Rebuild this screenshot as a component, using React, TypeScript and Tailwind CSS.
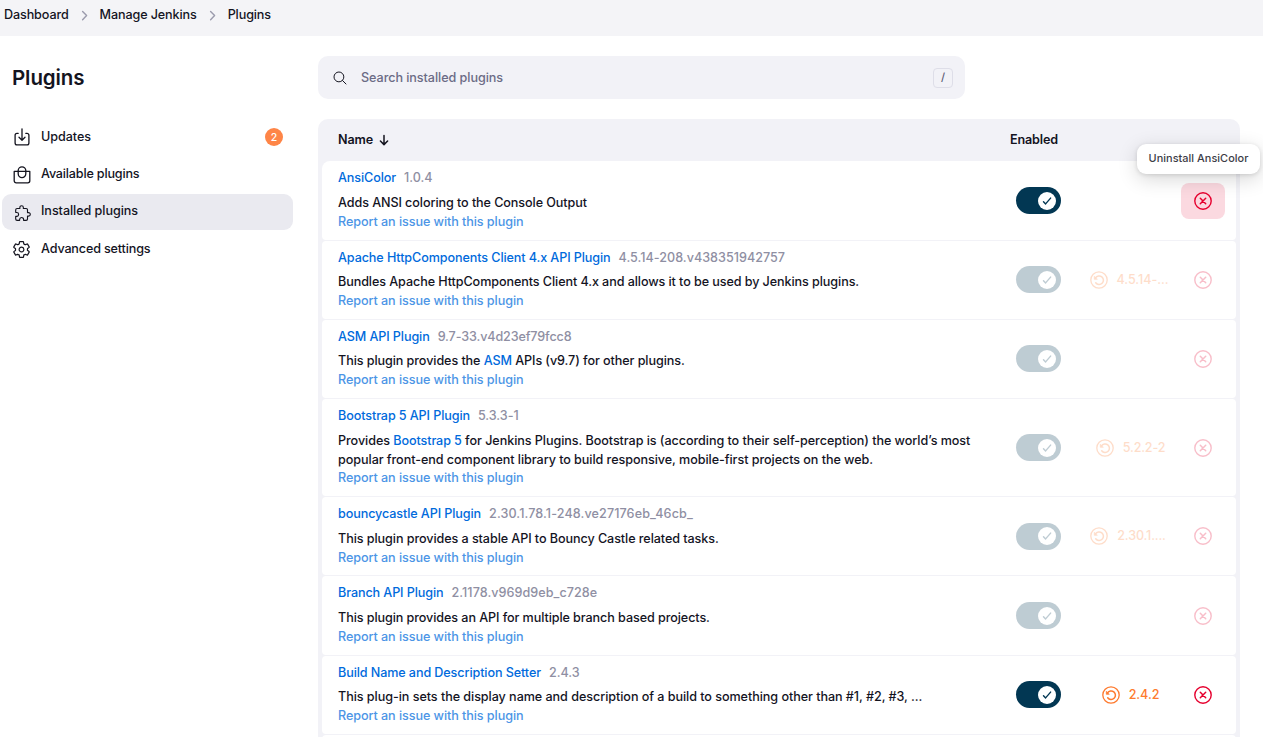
import React from 'react';
import { clsx } from 'clsx';
import { IoExtensionPuzzleOutline, IoSearchOutline, IoSettingsOutline } from 'react-icons/io5';

interface Plugin {
  name: string;
  version: string;
  versionClass?: string;
  description: React.ReactNode;
  descriptionClass?: string;
  spacing: string;
  reportSpacing?: string;
  height: string;
  enabledControls: boolean;
  downgrade?: string;
  downgradeClass?: string;
  highlighted?: boolean;
}

const linkClass = 'font-[550] text-[#006adc] tracking-[-0.1px]';

const plugins: Plugin[] = [
  {
    name: 'AnsiColor',
    version: '1.0.4',
    description: 'Adds ANSI coloring to the Console Output',
    descriptionClass: 'tracking-[-0.08px]',
    spacing: 'mt-[6px]',
    height: 'h-[79px]',
    enabledControls: true,
    highlighted: true,
  },
  {
    name: 'Apache HttpComponents Client 4.x API Plugin',
    version: '4.5.14-208.v438351942757',
    versionClass: 'tracking-[0.01px]',
    description: 'Bundles Apache HttpComponents Client 4.x and allows it to be used by Jenkins plugins.',
    descriptionClass: 'tracking-[-0.085px]',
    spacing: 'mt-[5px]',
    height: 'h-[78px] pb-px',
    enabledControls: false,
    downgrade: '4.5.14-...',
    downgradeClass: '-ml-px mr-px',
  },
  {
    name: 'ASM API Plugin',
    version: '9.7-33.v4d23ef79fcc8',
    versionClass: 'tracking-[-0.13px]',
    description: (
      <>
        This plugin provides the <a className={linkClass}>ASM</a> APIs (v9.7) for other plugins.
      </>
    ),
    descriptionClass: 'tracking-[-0.08px]',
    spacing: 'mt-[5px]',
    height: 'h-[78px] pb-px',
    enabledControls: false,
  },
  {
    name: 'Bootstrap 5 API Plugin',
    version: '5.3.3-1',
    description: (
      <>
        Provides <a className={linkClass}>Bootstrap 5</a> for Jenkins Plugins. Bootstrap is (according to their
        self-perception) the world’s most
        <br />
        popular front-end component library to build responsive, mobile-first projects on the web.
      </>
    ),
    spacing: 'mt-[6px]',
    reportSpacing: '-mt-px',
    height: 'h-[97px]',
    enabledControls: false,
    downgrade: '5.2.2-2',
    downgradeClass: 'ml-px tracking-[-0.2px]',
  },
  {
    name: 'bouncycastle API Plugin',
    version: '2.30.1.78.1-248.ve27176eb_46cb_',
    versionClass: 'tracking-[0.1px]',
    description: 'This plugin provides a stable API to Bouncy Castle related tasks.',
    descriptionClass: 'tracking-[-0.074px]',
    spacing: 'mt-[6px]',
    height: 'h-[78px]',
    enabledControls: false,
    downgrade: '2.30.1....',
    downgradeClass: 'mr-[4px] tracking-[-0.16px]',
  },
  {
    name: 'Branch API Plugin',
    version: '2.1178.v969d9eb_c728e',
    versionClass: 'tracking-[0.05px]',
    description: 'This plugin provides an API for multiple branch based projects.',
    descriptionClass: 'tracking-[-0.083px]',
    spacing: 'mt-[6px]',
    height: 'h-[79px]',
    enabledControls: false,
  },
  {
    name: 'Build Name and Description Setter',
    version: '2.4.3',
    description:
      'This plug-in sets the display name and description of a build to something other than #1, #2, #3, ...',
    descriptionClass: 'tracking-[-0.055px]',
    spacing: 'mt-[5px]',
    height: 'h-[78px] pb-px',
    enabledControls: true,
    downgrade: '2.4.2',
    downgradeClass: 'ml-px',
  },
];

interface StrokeIconProps {
  size: string;
  box: number;
  width: number;
  children: React.ReactNode;
}

function StrokeIcon({ size, box, width, children }: StrokeIconProps) {
  return (
    <svg
      className={clsx('shrink-0', size)}
      viewBox={`0 0 ${box} ${box}`}
      fill="none"
      stroke="currentColor"
      strokeWidth={width}
      strokeLinecap="round"
      strokeLinejoin="round"
    >
      {children}
    </svg>
  );
}

function DownloadIcon() {
  return (
    <StrokeIcon size="size-[18px]" box={18} width={1.3}>
      <path d="M5.2 5.3H4A1.9 1.9 0 0 0 2.1 7.2v7.8A1.9 1.9 0 0 0 4 16.9h10a1.9 1.9 0 0 0 1.9-1.9V7.2A1.9 1.9 0 0 0 14 5.3h-1.2" />
      <path d="M6 9.2l3 3 3-3M9 .8v11.2" />
    </StrokeIcon>
  );
}

function BagIcon() {
  return (
    <StrokeIcon size="size-[18px]" box={18} width={1.3}>
      <path d="M1.2 5.4h15.6v9.4a2 2 0 0 1-2 2H3.2a2 2 0 0 1-2-2z" />
      <path d="M5.2 5.2V4.600a3.800 3.800 0 0 1 7.600 0V7.800a3.800 3.800 0 0 1-7.600 0z" />
    </StrokeIcon>
  );
}

function ChevronIcon() {
  return (
    <span className="mx-[9px] mt-1 text-[#9b9bad]">
      <StrokeIcon size="size-[13px]" box={13} width={1.4}>
        <path d="M4.600 2.500l4 4.100-4 4.100" />
      </StrokeIcon>
    </span>
  );
}

function DowngradeIcon() {
  return (
    <StrokeIcon size="size-[18px]" box={18} width={1.3}>
      <circle cx="9" cy="9" r="8.2" />
      <path d="M5.500 6.900A4.300 4.300 0 1 1 5.700 11.800" strokeWidth="1.500" />
      <path d="M4.300 5.600v2.700h2.700z" fill="currentColor" strokeWidth="0.700" />
    </StrokeIcon>
  );
}

function CloseIcon() {
  return (
    <StrokeIcon size="size-[18px]" box={18} width={1.4}>
      <circle cx="9" cy="9" r="8.200" />
      <path d="M6.300 6.300l5.400 5.400M11.700 6.300l-5.400 5.400" strokeWidth="1.500" />
    </StrokeIcon>
  );
}

function Toggle() {
  return (
    <span className="flex h-[27px] w-[45px] items-center justify-end rounded-full bg-[#023753] pr-[5px]">
      <span className="flex size-[18px] items-center justify-center rounded-full bg-white text-[#023753]">
        <StrokeIcon size="size-[10px]" box={10} width={1.4}>
          <path d="M1.500 5.700l2.100 2.200 5-5.800" />
        </StrokeIcon>
      </span>
    </span>
  );
}

function PluginRow({ plugin }: { plugin: Plugin }) {
  const faded = !plugin.enabledControls;
  return (
    <div className={clsx('flex shrink-0 items-center rounded-[4px] bg-white', plugin.height, plugin.highlighted && 'rounded-t-[8px]')}>
      <div className="w-[694px] self-start pt-[7px] pl-4 leading-[19px] whitespace-nowrap">
        <div className="flex">
          <a className={linkClass}>{plugin.name}</a>
          <span className={clsx('ml-[8px] text-[#8f8fa3]', plugin.versionClass)}>{plugin.version}</span>
        </div>
        <div className={clsx(plugin.spacing, plugin.descriptionClass)}>{plugin.description}</div>
        <a className={clsx('block tracking-[-0.07px] text-[#4c95e6]', plugin.reportSpacing)}>Report an issue with this plugin</a>
      </div>
      <div className={clsx('w-[45px]', faded && 'opacity-25')}>
        <Toggle />
      </div>
      <div className="flex w-[120px] justify-center pl-[18px]">
        {plugin.downgrade && (
          <div className={clsx('flex h-[27px] items-center gap-[9px] text-[#fe7a2e]', faded && 'opacity-25', plugin.downgradeClass)}>
            <DowngradeIcon />
            <span className="pt-px">{plugin.downgrade}</span>
          </div>
        )}
      </div>
      <div
        className={clsx(
          'flex h-9 w-11 items-center justify-center rounded-[8px] text-[#e6002e]',
          plugin.highlighted && 'bg-[#fbd9e0]',
          faded && 'opacity-25',
        )}
      >
        <span className="pr-px">
          <CloseIcon />
        </span>
      </div>
    </div>
  );
}

export default function App() {
  return (
    <div className="flex h-[737px] w-full flex-col overflow-hidden bg-white font-['Inter',sans-serif] text-[12.6px] font-medium tracking-[-0.06px] text-[#14141f]">
      <header className="flex h-9 shrink-0 items-start bg-[#f4f4f7] pt-[5px] pl-1 leading-[20px]">
        <span className="tracking-[-0.12px]">Dashboard</span>
        <ChevronIcon />
        <span className="tracking-[-0.12px]">Manage Jenkins</span>
        <ChevronIcon />
        <span className="tracking-[-0.12px]">Plugins</span>
      </header>

      <div className="flex flex-1">
        <aside className="w-[293px] shrink-0 pt-[27px] pl-[2px]">
          <h1 className="pl-[10px] text-[20.5px] leading-[30px] font-semibold tracking-[-0.1px]">Plugins</h1>
          <nav className="mt-[26px] flex flex-col gap-px">
            <a className="flex h-9 items-center pl-[11px]">
              <DownloadIcon />
              <span className="ml-[10px]">Updates</span>
              <span className="mr-[10px] ml-auto flex size-[18px] items-center justify-center rounded-full bg-[#fe8547] pt-px text-[10.5px] text-white">2</span>
            </a>
            <a className="flex h-[37px] items-center pl-[11px]">
              <BagIcon />
              <span className="ml-[10px] tracking-[-0.18px]">Available plugins</span>
            </a>
            <a className="flex h-9 items-center rounded-[9px] bg-[#eaeaf0] pb-[2px] pl-[12px]">
              <IoExtensionPuzzleOutline className="mt-[3px] size-[18px]" />
              <span className="ml-[9px]">Installed plugins</span>
            </a>
            <a className="flex h-9 items-center pl-[10px]">
              <IoSettingsOutline className="size-[19px]" />
              <span className="ml-[10px] tracking-[-0.16px]">Advanced settings</span>
            </a>
          </nav>
        </aside>

        <main className="ml-[25px] w-[922px] pt-5">
          <div className="flex h-[43px] w-[647px] items-center rounded-[10px] bg-[#f2f2f7] pr-3 pl-[14px]">
            <IoSearchOutline className="size-4" />
            <span className="ml-[13px] pt-px text-[#6b6b85]">Search installed plugins</span>
            <kbd className="ml-auto flex size-5 items-center justify-center rounded-[4px] border border-[#dedee8] font-['Inter',sans-serif] text-[11px] text-[#5c5c75]">/</kbd>
          </div>

          <section className="mt-5 flex h-[640px] flex-col rounded-t-[10px] bg-[#f2f2f7] px-1">
            <div className="flex h-[42px] shrink-0 items-center pl-4 font-semibold tracking-[-0.15px]">
              <span className="flex w-[672px] items-center gap-[5px]">
                Name
                <StrokeIcon size="size-3" box={12} width={1.5}>
                  <path d="M6 1.500v9M2.400 7l3.600 3.600L9.600 7" />
                </StrokeIcon>
              </span>
              <span>Enabled</span>
            </div>
            <div className="flex flex-col gap-px">
              {plugins.map((plugin) => (
                <PluginRow key={plugin.name} plugin={plugin} />
              ))}
              <div className="h-[78px] rounded-[4px] bg-white" />
            </div>
          </section>
        </main>
      </div>

      <div
        role="tooltip"
        className="absolute top-[144px] left-[1137px] flex h-[30px] w-[123px] items-center justify-center rounded-[9px] bg-white pb-px text-[10.9px] tracking-[0.04px] text-[#3c3c46] shadow-[0_5px_20px_rgba(0,0,0,0.16),0_1px_4px_rgba(0,0,0,0.12)]"
      >
        Uninstall AnsiColor
      </div>
    </div>
  );
}
